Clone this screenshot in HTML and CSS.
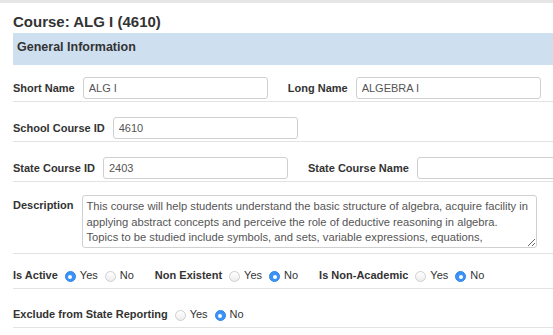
FILE: index.html
```html
<!DOCTYPE html>
<html lang="en">
<head>
  <meta charset="UTF-8" />
  <title>Course: ALG I (4610)</title>
  <link rel="stylesheet" href="styles.css">
</head>
<body>
  <div class="topbar"></div>

  <div class="page">
    <h1 class="title">Course: ALG I (4610)</h1>

    <div class="section-head">General Information</div>

    <div class="row first">
      <div class="field">
        <label class="lbl">Short Name</label>
        <input class="txt" type="text" value="ALG I">
      </div>
      <div class="field">
        <label class="lbl">Long Name</label>
        <input class="txt" type="text" value="ALGEBRA I">
      </div>
    </div>

    <div class="row">
      <div class="field">
        <label class="lbl">School Course ID</label>
        <input class="txt" type="text" value="4610">
      </div>
    </div>

    <div class="row">
      <div class="field">
        <label class="lbl">State Course ID</label>
        <input class="txt" type="text" value="2403">
      </div>
      <div class="field">
        <label class="lbl">State Course Name</label>
        <input class="txt" type="text" value="">
      </div>
    </div>

    <div class="row desc-row">
      <div class="field top">
        <label class="lbl desc-lbl">Description</label>
        <textarea class="desc">This course will help students understand the basic structure of algebra, acquire facility in
applying abstract concepts and perceive the role of deductive reasoning in algebra.
Topics to be studied include symbols, and sets, variable expressions, equations,
inequalities, and problem solving.</textarea>
      </div>
    </div>

    <div class="row radio-row">
      <div class="field">
        <span class="lbl">Is Active</span>
        <span class="radio on"></span><span class="opt">Yes</span>
        <span class="radio"></span><span class="opt">No</span>
      </div>
      <div class="field">
        <span class="lbl">Non Existent</span>
        <span class="radio"></span><span class="opt">Yes</span>
        <span class="radio on"></span><span class="opt">No</span>
      </div>
      <div class="field">
        <span class="lbl">Is Non-Academic</span>
        <span class="radio"></span><span class="opt">Yes</span>
        <span class="radio on"></span><span class="opt">No</span>
      </div>
    </div>

    <div class="row radio-row last">
      <div class="field">
        <span class="lbl">Exclude from State Reporting</span>
        <span class="radio"></span><span class="opt">Yes</span>
        <span class="radio on"></span><span class="opt">No</span>
      </div>
    </div>
  </div>
</body>
</html>
```

FILE: styles.css
```css
* {
  margin: 0;
  padding: 0;
  box-sizing: border-box;
}

body {
  font-family: "Liberation Sans", Arial, sans-serif;
  color: #333;
  background: #fff;
  overflow: hidden;
}

.topbar {
  height: 3px;
  background: #e6e6e6;
}

.page {
  padding-left: 13px;
  overflow: hidden;
}

.title {
  font-size: 15px;
  line-height: 18px;
  font-weight: bold;
  margin-top: 10px;
  margin-bottom: 2px;
}

.section-head {
  height: 32px;
  background: #cedff0;
  font-size: 12.5px;
  font-weight: bold;
  line-height: 16px;
  padding: 6px 4px 0;
}

.row {
  display: flex;
  align-items: center;
  gap: 20px;
  padding: 15px 0 2px;
  border-bottom: 1px solid #e3e3e3;
  overflow: hidden;
}

.row.first {
  padding-top: 12px;
}

.field {
  display: flex;
  align-items: center;
  flex-shrink: 0;
}

.field.top {
  align-items: flex-start;
}

.lbl {
  font-size: 11px;
  font-weight: bold;
  margin-right: 8px;
  white-space: nowrap;
}

.desc-lbl {
  margin-top: 4px;
}

.txt {
  width: 185px;
  height: 22px;
  border: 1px solid #d0d0d0;
  border-radius: 3px;
  padding: 0 5px;
  font-family: inherit;
  font-size: 11px;
  color: #555;
  background: #fff;
}

.desc-row {
  padding-top: 13px;
  padding-bottom: 5px;
}

.desc {
  display: block;
  width: 455px;
  height: 53px;
  border: 1px solid #d0d0d0;
  border-radius: 3px;
  padding: 3px 4px;
  font-family: inherit;
  font-size: 11.2px;
  line-height: 15.5px;
  color: #555;
  overflow: hidden;
  resize: vertical;
}

.radio-row {
  gap: 21px;
  padding: 14px 0 6px;
}

.radio-row.last {
  padding-top: 18px;
  padding-bottom: 6px;
}

.radio-row .lbl {
  margin-right: 7px;
}

.radio {
  width: 11px;
  height: 11px;
  border-radius: 50%;
  border: 1px solid #cfcfcf;
  background: linear-gradient(#fff, #ededed);
  margin-top: 3px;
  margin-right: 4px;
  display: inline-flex;
  align-items: center;
  justify-content: center;
}

.radio.on {
  border-color: #2f86f0;
  background: #3b92f5;
}

.radio.on::after {
  content: "";
  width: 4px;
  height: 4px;
  border-radius: 50%;
  background: #fff;
}

.opt {
  font-size: 11px;
  margin-right: 7px;
}

.opt:last-child {
  margin-right: 0;
}
```
